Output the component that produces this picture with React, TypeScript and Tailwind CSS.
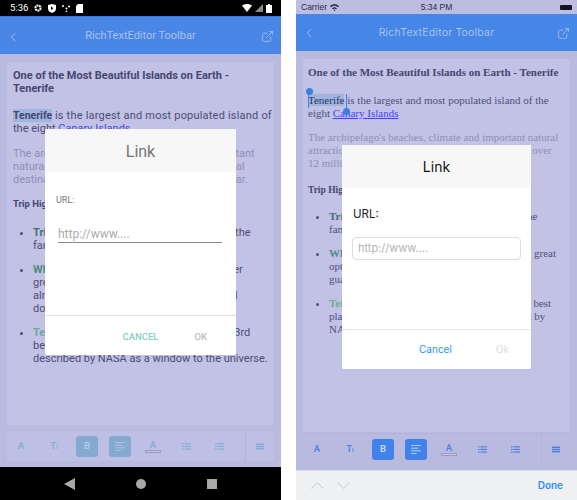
import { ChevronLeft, ExternalLink } from 'lucide-react';

type ToolbarProps = {
  icon: string;
  tile: string;
  fg: string;
};

const ListIcon = ({ color }: { color: string }) => (
  <svg width="9" height="7" viewBox="0 0 11 8" fill={color}>
    <rect x="0" y="0" width="2" height="1.4" />
    <rect x="3" y="0" width="8" height="1.4" />
    <rect x="0" y="3.2" width="2" height="1.4" />
    <rect x="3" y="3.2" width="8" height="1.4" />
    <rect x="0" y="6.4" width="2" height="1.4" />
    <rect x="3" y="6.4" width="8" height="1.4" />
  </svg>
);

const AlignIcon = ({ color }: { color: string }) => (
  <svg width="10" height="9" viewBox="0 0 11 10" fill={color}>
    <rect width="11" height="1" />
    <rect y="3" width="8" height="1" />
    <rect y="6" width="11" height="1" />
    <rect y="9" width="6" height="1" />
  </svg>
);

const MenuIcon = ({ color }: { color: string }) => (
  <svg width="8" height="7" viewBox="0 0 11 8" fill={color}>
    <rect width="11" height="2" />
    <rect y="3" width="11" height="2" />
    <rect y="6" width="11" height="2" />
  </svg>
);

const Toolbar = ({ icon, tile, fg }: ToolbarProps) => (
  <div className="flex h-full w-full items-center font-['Roboto',sans-serif]">
    <div className="flex flex-1 items-center gap-[11px] pl-[3px]">
      <span className="w-[22px] text-center text-[9.5px] font-medium" style={{ color: icon }}>
        A
      </span>
      <span className="w-[22px] text-center text-[9.5px] font-medium" style={{ color: icon }}>
        T<span className="text-[6px]">I</span>
      </span>
      <span
        className="flex h-[21px] w-[22px] items-center justify-center rounded-[3px] text-[9.5px] font-bold"
        style={{ backgroundColor: tile, color: fg }}>
        B
      </span>
      <span
        className="flex h-[21px] w-[22px] items-center justify-center rounded-[3px]"
        style={{ backgroundColor: tile }}>
        <AlignIcon color={fg} />
      </span>
      <span className="flex w-[22px] flex-col items-center text-[9.5px] font-medium leading-[11px]" style={{ color: icon }}>
        A
        <span className="h-[3px] w-[16px] border border-[#9a9ac4] bg-[#c6c7e6]" />
      </span>
      <span className="flex w-[22px] justify-center">
        <ListIcon color={icon} />
      </span>
      <span className="flex w-[22px] justify-center">
        <ListIcon color={icon} />
      </span>
    </div>
    <div className="flex h-full w-[29px] items-center justify-center border-l border-[#b2b3da]">
      <MenuIcon color={icon} />
    </div>
  </div>
);

const AndroidPhone = () => (
  <div className="relative flex h-[500px] w-[281px] flex-col bg-[#b9bae0] font-['Roboto',sans-serif]">
    <div className="flex h-[16px] items-center justify-between bg-black pl-[10px] pr-[9px] text-white">
      <div className="flex items-center gap-[6px]">
        <span className="text-[9.5px] leading-none">5:36</span>
        <svg width="8" height="8" viewBox="0 0 8 8" fill="#fff">
          <circle cx="4" cy="4" r="2.6" fill="none" stroke="#fff" strokeWidth="2" strokeDasharray="2 0.6" />
        </svg>
        <svg width="8" height="9" viewBox="0 0 8 9" fill="#fff">
          <path d="M0 1 4 0l4 1v3.5C8 7 6 8.300 4 9 2 8.300 0 7 0 4.500Z" />
          <path d="M3 2.500 5.500 4.300 3 6Z" fill="#000" />
        </svg>
        <svg width="8" height="7" viewBox="0 0 8 7" fill="#fff">
          <circle cx="1" cy="1" r="1" />
          <circle cx="7" cy="1.500" r="1" />
          <circle cx="4.500" cy="3.500" r="1" />
          <circle cx="4.500" cy="6.300" r="0.800" />
        </svg>
        <svg width="7" height="9" viewBox="0 0 7 9" fill="#fff">
          <path d="M2 0h5v9H0V2Z" />
        </svg>
      </div>
      <div className="flex items-center gap-[3px]">
        <svg width="10" height="8" viewBox="0 0 10 8" fill="#fff">
          <path d="M0 1.500C3 -.5 7 -.5 10 1.500L5 8Z" />
        </svg>
        <svg width="8" height="8" viewBox="0 0 8 8" fill="#8a8a8a">
          <path d="M8 0v8H0Z" />
        </svg>
        <svg width="6" height="9" viewBox="0 0 6 9" fill="#fff">
          <path d="M2 0h2v1h2v8H0V1h2Z" />
        </svg>
      </div>
    </div>
    <div className="flex h-[38px] items-center justify-between border-t border-[#3f78d0] bg-[#4a86e6] pl-[6px] pr-[7px] pt-[2px] text-[#a9c1ee]">
      <ChevronLeft size={14} strokeWidth={1.5} />
      <span className="text-[11px]">RichTextEditor Toolbar</span>
      <ExternalLink size={13} strokeWidth={1.5} />
    </div>
    <div className="flex flex-1 flex-col px-[7px] pt-[8px]">
      <div className="h-[363px] overflow-hidden whitespace-nowrap bg-[#c1c2e6] pl-[6px] pt-[7px] text-[11px] leading-[13px] text-[#4c4c74]">
        <p className="font-bold text-[#46466e]">
          One of the Most Beautiful Islands on Earth -<br />
          Tenerife
        </p>
        <p className="mt-[14px]">
          <span className="bg-[#9fb6e0] text-[10.5px] font-bold text-[#46466e]">Tenerife</span>{' '}
          <span className="tracking-[0.2px]">is the largest and most populated island of</span>
          <br />
          the eight <span className="text-[#4747e0] underline">Canary Islands</span>.
        </p>
        <p className="mt-[12px] text-[#8f8fb5]">
          The archipelago's beaches, climate and important
          <br />
          natural attractions make it a major international
          <br />
          destination with over 12 million visitors per year.
        </p>
        <p className="mt-[11px] text-[9.5px] font-bold text-[#46466e]">Trip Highlights</p>
        <ul className="mt-[16px] flex list-disc flex-col gap-[11px] pl-[20px]">
          <li>
            <b className="text-[#3f6f72]">Trips</b> to the Teide National Park, home of the
            <br />
            famous peak
          </li>
          <li>
            <b className="text-[#4f8a84]">Whale</b> and dolphin watching offers another
            <br />
            great activity here, offering sightings
            <br />
            almost all the year of whale and protected
            <br />
            dolphins
          </li>
          <li>
            <b className="text-[#6fa79a]">Teide</b> Observatory is home to the world's 3rd
            <br />
            best place for stargazing and is
            <br />
            described by NASA as a window to the universe.
          </li>
        </ul>
      </div>
      <div className="mt-[5px] h-[31px] border-t border-[#b2b3da] bg-[#bebfe4]">
        <Toolbar icon="#84a9d4" tile="#84aacf" fg="#b6c6e6" />
      </div>
    </div>
    <div className="flex h-[33px] items-center justify-around bg-black px-[33px]">
      <svg width="11" height="12" viewBox="0 0 11 12" fill="#a8a8a8">
        <path d="M11 0v12L0 6Z" />
      </svg>
      <span className="h-[10px] w-[10px] rounded-full bg-[#a8a8a8]" />
      <span className="h-[10px] w-[10px] bg-[#a8a8a8]" />
    </div>

    <div className="absolute left-[45px] top-[129px] flex h-[226px] w-[191px] flex-col rounded-[2px] bg-white">
      <div className="flex h-[43px] items-center justify-center bg-[#f7f7f7] pt-[3px] text-[16px] text-[#757575]">Link</div>
      <div className="pl-[11px] pt-[23px] text-[9px] leading-[11px] text-[#777]">URL:</div>
      <div className="ml-[13px] mr-[14px] mt-[15px] h-[22px] border-b border-[#8a8a8a] text-[12px] leading-[26px] text-[#aaa]">
        http://www....
      </div>
      <div className="mt-[72px] flex flex-1 items-center justify-end gap-[36px] border-t border-[#e2e2e2] pr-[29px] pt-[3px] text-[9.5px] font-medium">
        <span className="text-[#83cfc2]">CANCEL</span>
        <span className="text-[#bdbdbd]">OK</span>
      </div>
    </div>
  </div>
);

const IosPhone = () => (
  <div className="relative flex h-[500px] w-[281px] flex-col bg-[#b9bae0]">
    <div className="grid h-[14px] grid-cols-3 items-center bg-[#bcbde0] px-[5px] font-['Liberation_Sans',sans-serif] text-[8.500px] text-[#2b2b3f]">
      <div className="flex items-center gap-[3px]">
        Carrier
        <svg width="9" height="7" viewBox="0 0 9 7" fill="#26263a">
          <path d="M0 2.300C2.500 -.3 6.500 -.3 9 2.300L8 3.300C6 1.300 3 1.300 1 3.300ZM2 4.300C3.500 2.800 5.500 2.800 7 4.300L6 5.300C5 4.300 4 4.300 3 5.300ZM3.700 6 4.500 5.300 5.300 6 4.500 7Z" />
        </svg>
      </div>
      <span className="text-center">5:34 PM</span>
      <span className="h-[5px] w-[12px] justify-self-end rounded-[1px] bg-[#14141f]" />
    </div>
    <div className="flex h-[37px] items-center justify-between bg-[#4586e6] pl-[6px] pr-[7px] pt-[1px] font-['Inter',sans-serif] text-[#a9c1ee]">
      <ChevronLeft size={14} strokeWidth={1.5} />
      <span className="text-[10.5px] tracking-[0.2px]">RichTextEditor Toolbar</span>
      <ExternalLink size={13} strokeWidth={1.5} />
    </div>
    <div className="flex flex-1 flex-col px-[7px] pt-[8px]">
      <div className="h-[373px] overflow-hidden whitespace-nowrap bg-[#c1c2e6] pl-[5px] pt-[7px] font-['Liberation_Serif',serif] text-[11px] leading-[13px] text-[#50507a]">
        <p className="font-bold text-[#46466e]">One of the Most Beautiful Islands on Earth - Tenerife</p>
        <p className="relative mt-[15px]">
          <span className="bg-[#9fb6e0] text-[#33335c]">Tenerife</span> is the largest and most populated island of the
          <br />
          eight <span className="text-[#4747e0] underline">Canary Islands</span>
          <span className="absolute left-[0px] top-[-3px] h-[17px] w-[1px] bg-[#3f7fe0]" />
          <span className="absolute left-[38px] top-[0px] h-[17px] w-[1px] bg-[#3f7fe0]" />
          <span className="absolute left-[-2px] top-[-6px] h-[7px] w-[7px] rounded-full bg-[#3f7fe0]" />
          <span className="absolute left-[35px] top-[14px] h-[7px] w-[7px] rounded-full bg-[#3f7fe0]" />
        </p>
        <p className="mt-[11px] text-[#8f8fb5]">
          The archipelago's beaches, climate and important natural
          <br />
          attractions make it a major tourist destination with over
          <br />
          12 million visitors per year.
        </p>
        <p className="mt-[14px] text-[9.5px] font-bold text-[#46466e]">Trip Highlights</p>
        <ul className="mt-[13px] flex list-disc flex-col gap-[11px] pl-[21px]">
          <li>
            <b className="text-[#3f6f72]">Trips</b> to the Teide National Park, a home of the
            <br />
            famous peak
          </li>
          <li>
            <b className="text-[#4f8a84]">Whale</b> and dolphin watching is another really great
            <br />
            option here, with sightings of whales
            <br />
            guaranteed
          </li>
          <li>
            <b className="text-[#6fa79a]">Teide</b> Observatory is the world's third and the best
            <br />
            place for stargazing, and it has been described by
            <br />
            NASA
          </li>
        </ul>
      </div>
      <div className="mt-[1px] h-[31px] w-[267px] border-t border-[#b2b3da]">
        <Toolbar icon="#4a80e2" tile="#3f82e9" fg="#c3d6f5" />
      </div>
    </div>
    <div className="flex h-[30px] items-center justify-between border-t border-[#dcdde2] bg-[#eff0f2] pl-[15px] pr-[14px] font-['Inter',sans-serif]">
      <div className="flex gap-[13px]">
        <svg width="13" height="7" viewBox="0 0 13 7" fill="none" stroke="#c4c6cb">
          <path d="M.5 6.500 6.500 .7 12.500 6.500" />
        </svg>
        <svg width="13" height="7" viewBox="0 0 13 7" fill="none" stroke="#c4c6cb">
          <path d="M.5 .5 6.500 6.300 12.500 .5" />
        </svg>
      </div>
      <span className="text-[10px] font-semibold text-[#2f8fff]">Done</span>
    </div>

    <div className="absolute left-[46px] top-[145px] flex h-[224px] w-[189px] flex-col rounded-[2px] bg-white font-['Inter',sans-serif]">
      <div className="flex h-[43px] items-center justify-center bg-[#f7f7f7] text-[14px] text-[#111]">Link</div>
      <div className="pl-[11px] pt-[19px] text-[11.5px] leading-[14px] text-[#222]">URL:</div>
      <div className="ml-[10px] mr-[10px] mt-[16px] flex h-[23px] items-center rounded-[4px] border border-[#ddd] pl-[5px] text-[11px] text-[#b4b4b4]">
        http://www....
      </div>
      <div className="mt-[69px] flex flex-1 items-center justify-end gap-[44px] border-t border-[#e8e8e8] pr-[22px] text-[10px]">
        <span className="text-[#2f8fff]">Cancel</span>
        <span className="text-[#dcdcdc]">Ok</span>
      </div>
    </div>
  </div>
);

export default function App() {
  return (
    <div className="flex h-[500px] w-[577px] gap-[15px] overflow-hidden bg-white">
      <AndroidPhone />
      <IosPhone />
    </div>
  );
}
